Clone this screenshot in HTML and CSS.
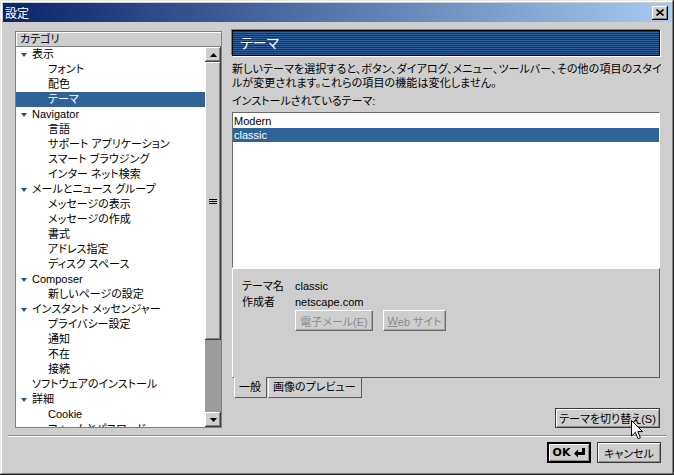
FILE: index.html
```html
<!DOCTYPE html>
<html lang="ja">
<head>
    <meta charset="UTF-8">
    <title>設定</title>
    <link rel="stylesheet" href="styles.css">
</head>
<body>
    <div class="window">
        <div class="titlebar">
            <span class="title">設定</span>
            <span class="close-btn">
                <svg width="8" height="7" viewBox="0 0 8 7"><path d="M0.5 0.5 L7.5 6.5 M7.5 0.5 L0.5 6.5" stroke="#000" stroke-width="1.6"/></svg>
            </span>
        </div>

        <div class="main">
            <!-- カテゴリ ツリー -->
            <div class="tree">
                <div class="tree-head">カテゴリ</div>
                <div class="tree-body">
                    <div class="rows">
                        <div class="row parent"><span class="twisty"></span>表示</div>
                        <div class="row child">フォント</div>
                        <div class="row child">配色</div>
                        <div class="row child selected">テーマ</div>
                        <div class="row parent"><span class="twisty"></span>Navigator</div>
                        <div class="row child">言語</div>
                        <div class="row child">サポート アプリケーション</div>
                        <div class="row child">スマート ブラウジング</div>
                        <div class="row child">インター ネット検索</div>
                        <div class="row parent"><span class="twisty"></span>メールとニュース グループ</div>
                        <div class="row child">メッセージの表示</div>
                        <div class="row child">メッセージの作成</div>
                        <div class="row child">書式</div>
                        <div class="row child">アドレス指定</div>
                        <div class="row child">ディスク スペース</div>
                        <div class="row parent"><span class="twisty"></span>Composer</div>
                        <div class="row child">新しいページの設定</div>
                        <div class="row parent"><span class="twisty"></span>インスタント メッセンジャー</div>
                        <div class="row child">プライバシー設定</div>
                        <div class="row child">通知</div>
                        <div class="row child">不在</div>
                        <div class="row child">接続</div>
                        <div class="row leaf">ソフトウェアのインストール</div>
                        <div class="row parent"><span class="twisty"></span>詳細</div>
                        <div class="row child">Cookie</div>
                        <div class="row child">フォームとパスワード</div>
                    </div>
                    <div class="vscroll">
                        <div class="sb-btn">
                            <svg width="7" height="4" viewBox="0 0 7 4"><path d="M3.5 0 L7 4 L0 4 Z" fill="#000"/></svg>
                        </div>
                        <div class="sb-thumb"><span class="grip"></span></div>
                        <div class="sb-track"></div>
                        <div class="sb-btn">
                            <svg width="7" height="4" viewBox="0 0 7 4"><path d="M0 0 L7 0 L3.5 4 Z" fill="#000"/></svg>
                        </div>
                    </div>
                </div>
            </div>

            <!-- テーマ パネル -->
            <div class="pane">
                <div class="pane-head">テーマ</div>
                <p class="desc">
                    <span>新しいテーマを選択すると、ボタン、ダイアログ、メニュー、ツールバー、その他の項目のスタイ</span>
                    <span>ルが変更されます。これらの項目の機能は変化しません。</span>
                </p>
                <div class="label">インストールされているテーマ:</div>
                <div class="listbox">
                    <div class="item">Modern</div>
                    <div class="item selected">classic</div>
                </div>
                <div class="details">
                    <div class="info">
                        <span>テーマ名</span><span>classic</span>
                        <span>作成者</span><span>netscape.com</span>
                    </div>
                    <div class="info-buttons">
                        <button class="btn disabled mail">電子メール(E)</button>
                        <button class="btn disabled web"><u>W</u>eb サイト</button>
                    </div>
                </div>
                <div class="tabs">
                    <span class="tab active">一般</span>
                    <span class="tab">画像のプレビュー</span>
                </div>
                <div class="switch-row">
                    <button class="btn switch">テーマを切り替え(S)</button>
                </div>
            </div>
        </div>

        <div class="sep"></div>

        <div class="footer">
            <button class="btn default">
                <b>OK</b>
                <svg width="11" height="9" viewBox="0 0 11 9"><path d="M0 5.5 L4 1.5 L4 4 L8 4 L8 0 L11 0 L11 7 L4 7 L4 9.5 Z" fill="#000"/></svg>
            </button>
            <button class="btn cancel">キャンセル</button>
        </div>

        <svg class="cursor" width="13" height="20" viewBox="0 0 13 20">
            <path d="M0.5 0.5 L0.5 16 L4.3 12.4 L7 18.6 L9.4 17.6 L6.8 11.6 L11.6 11.6 Z" fill="#fff" stroke="#000" stroke-width="1"/>
        </svg>
    </div>
</body>
</html>
```

FILE: styles.css
```css
:root {
    --face: #cecece;
    --select: #306498;
    --dark: #404040;
    --shadow: #808080;
}

* {
    box-sizing: border-box;
}

body {
    margin: 0;
    font-family: "Liberation Sans", "Noto Sans CJK JP", sans-serif;
    font-size: 11px;
    font-feature-settings: "palt";
    color: #000;
    background: var(--face);
}

.window {
    position: relative;
    width: 674px;
    height: 475px;
    padding: 3px;
    display: flex;
    flex-direction: column;
    background: var(--face);
    box-shadow: inset -1px -1px #202020, inset 1px 1px #e8e8e8, inset -2px -2px var(--shadow), inset 2px 2px #fff;
    overflow: hidden;
}

/* タイトルバー */
.titlebar {
    height: 19px;
    display: flex;
    align-items: center;
    justify-content: space-between;
    padding: 0 3px 0 2px;
    background: linear-gradient(to right, #0a246a, #a6caf0);
}

.title {
    color: #fff;
    font-size: 12px;
}

.close-btn {
    width: 16px;
    height: 14px;
    display: flex;
    align-items: center;
    justify-content: center;
    background: var(--face);
    box-shadow: inset -1px -1px #000, inset 1px 1px #fff, inset -2px -2px var(--shadow);
}

.main {
    display: flex;
    gap: 10px;
    padding: 8px 11px 0 12px;
}

/* ツリー */
.tree {
    width: 207px;
    height: 397px;
    margin-top: 1px;
    border: 1px solid var(--shadow);
    display: flex;
    flex-direction: column;
}

.tree-head {
    height: 15px;
    line-height: 14px;
    padding-left: 4px;
    border-bottom: 1px solid var(--shadow);
    box-shadow: inset 1px 1px #fff;
}

.tree-body {
    flex: 1;
    display: flex;
    min-height: 0;
}

.rows {
    flex: 1;
    background: #fff;
    overflow: hidden;
}

.row {
    height: 15px;
    line-height: 15px;
    white-space: nowrap;
    display: flex;
    align-items: center;
}

.row.parent,
.row.leaf {
    padding-left: 16px;
}

.row.child {
    padding-left: 32px;
}

.row.selected {
    background: var(--select);
    color: #fff;
}

.twisty {
    width: 0;
    height: 0;
    margin-left: -11px;
    margin-right: 5px;
    border-left: 3.5px solid transparent;
    border-right: 3.5px solid transparent;
    border-top: 4px solid #24557f;
}

.vscroll {
    width: 16px;
    display: flex;
    flex-direction: column;
}

.sb-btn {
    height: 15px;
    display: flex;
    align-items: center;
    justify-content: center;
    background: var(--face);
    box-shadow: inset -1px -1px var(--dark), inset 1px 1px #fff, inset -2px -2px var(--shadow);
}

.sb-thumb {
    height: 278px;
    display: flex;
    align-items: center;
    justify-content: center;
    background: var(--face);
    box-shadow: inset -1px -1px var(--dark), inset 1px 1px #fff, inset -2px -2px var(--shadow);
}

.grip {
    width: 8px;
    height: 5px;
    border-top: 1px solid #000;
    border-bottom: 1px solid #000;
    background: linear-gradient(#000, #000) center / 100% 1px no-repeat;
}

.sb-track {
    flex: 1;
    background: #9c9c9c;
}

/* 右パネル */
.pane {
    width: 428px;
    display: flex;
    flex-direction: column;
}

.pane-head {
    height: 26px;
    padding-left: 7px;
    line-height: 24px;
    color: #fff;
    font-size: 14px;
    border: 1px solid #000;
    box-shadow: -1px -1px 0 var(--shadow), 1px 1px 0 #fff;
    background: repeating-linear-gradient(to bottom, #0e3468 0, #0e3468 1px, #31609a 1px, #31609a 2px);
}

.desc {
    margin: 6px 0 0;
    line-height: 14px;
}

.desc span {
    display: block;
    white-space: nowrap;
    letter-spacing: 0.1px;
}

.label {
    margin-top: 4px;
    line-height: 14px;
}

.listbox {
    height: 156px;
    margin-top: 4px;
    background: #fff;
    border: 1px solid;
    border-color: #6c6c6c #fff #fff #6c6c6c;
    padding-top: 1px;
}

.item {
    height: 14px;
    line-height: 14px;
    padding-left: 1px;
}

.item.selected {
    background: var(--select);
    color: #fff;
}

.details {
    height: 110px;
    padding: 9px 9px 0;
    border: 1px solid;
    border-color: #fff #5a5a5a #5a5a5a #fff;
}

.info {
    display: grid;
    grid-template-columns: 53px auto;
    line-height: 16px;
}

.info-buttons {
    display: flex;
    gap: 10px;
    padding-left: 53px;
}

.tabs {
    display: flex;
    gap: 1px;
    padding-left: 2px;
}

.tab {
    height: 20px;
    line-height: 19px;
    padding: 0 4px;
    border: 1px solid;
    border-top: none;
    border-color: #fff #5a5a5a #5a5a5a #fff;
}

.tab:first-child {
    width: 33px;
}

.tab:last-child {
    width: 94px;
}

.tab.active {
    margin-top: -1px;
    height: 21px;
    padding-top: 1px;
    background: var(--face);
}

.switch-row {
    display: flex;
    justify-content: flex-end;
    margin-top: 10px;
}

/* ボタン */
.btn {
    height: 21px;
    padding: 0;
    font: inherit;
    font-feature-settings: "palt";
    color: #000;
    background: var(--face);
    border: 1px solid #3a3a3a;
    box-shadow: inset 1px 1px #fff, inset -1px -1px #8c8c8c;
    display: inline-flex;
    align-items: center;
    justify-content: center;
}

.btn.switch {
    width: 105px;
    height: 20px;
}

.btn.disabled {
    color: #8a8a8a;
    border-color: #fff #6a6a6a #6a6a6a #fff;
    box-shadow: inset -1px -1px #a4a4a4;
}

.btn.mail {
    width: 78px;
}

.btn.web {
    width: 63px;
}

.btn.default {
    width: 44px;
    gap: 4px;
    border: 2px solid #000;
    box-shadow: inset 1px 1px #fff, inset -1px -1px #8c8c8c;
}

.btn.default b {
    font-family: "DejaVu Sans", sans-serif;
    font-size: 11px;
}

.btn.cancel {
    width: 64px;
}

.sep {
    margin: 7px 5px 0;
    height: 2px;
    border-top: 1px solid #888;
    border-bottom: 1px solid #fff;
}

.footer {
    display: flex;
    justify-content: flex-end;
    gap: 6px;
    padding: 5px 10px 0 0;
}

.cursor {
    position: absolute;
    left: 631px;
    top: 420px;
}
```
